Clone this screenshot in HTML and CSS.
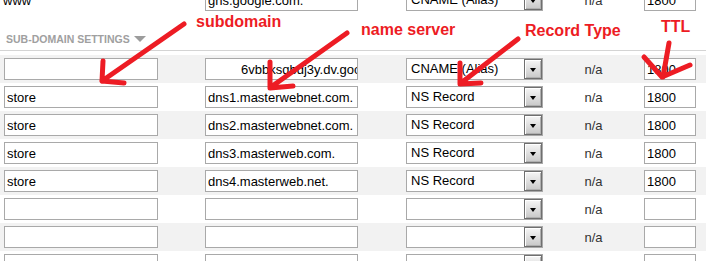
FILE: index.html
```html
<!DOCTYPE html>
<html lang="en">
<head>
    <meta charset="UTF-8">
    <title>Sub-domain settings</title>
    <link rel="stylesheet" href="styles.css">
</head>
<body>
    <div class="records">
        <div class="row">
            <span class="host-label">www</span>
            <input class="field" type="text" value="gns.google.com.">
            <div class="select"><span class="select-value">CNAME (Alias)</span><span class="drop"></span></div>
            <span class="na">n/a</span>
            <input class="field ttl" type="text" value="1800">
        </div>
    </div>

    <div class="section-head">SUB-DOMAIN SETTINGS <span class="caret"></span></div>

    <div class="records">
        <div class="row alt">
            <input class="field" type="text" value="">
            <input class="field masked" type="text" value="6vbbksqbdj3y.dv.googlehosted.com.">
            <div class="select"><span class="select-value">CNAME (Alias)</span><span class="drop"></span></div>
            <span class="na">n/a</span>
            <input class="field ttl" type="text" value="1800">
        </div>
        <div class="row">
            <input class="field" type="text" value="store">
            <input class="field" type="text" value="dns1.masterwebnet.com.">
            <div class="select"><span class="select-value">NS Record</span><span class="drop"></span></div>
            <span class="na">n/a</span>
            <input class="field ttl" type="text" value="1800">
        </div>
        <div class="row alt">
            <input class="field" type="text" value="store">
            <input class="field" type="text" value="dns2.masterwebnet.com.">
            <div class="select"><span class="select-value">NS Record</span><span class="drop"></span></div>
            <span class="na">n/a</span>
            <input class="field ttl" type="text" value="1800">
        </div>
        <div class="row">
            <input class="field" type="text" value="store">
            <input class="field" type="text" value="dns3.masterweb.com.">
            <div class="select"><span class="select-value">NS Record</span><span class="drop"></span></div>
            <span class="na">n/a</span>
            <input class="field ttl" type="text" value="1800">
        </div>
        <div class="row alt">
            <input class="field" type="text" value="store">
            <input class="field" type="text" value="dns4.masterweb.net.">
            <div class="select"><span class="select-value">NS Record</span><span class="drop"></span></div>
            <span class="na">n/a</span>
            <input class="field ttl" type="text" value="1800">
        </div>
        <div class="row">
            <input class="field" type="text" value="">
            <input class="field" type="text" value="">
            <div class="select"><span class="select-value"></span><span class="drop"></span></div>
            <span class="na">n/a</span>
            <input class="field ttl" type="text" value="">
        </div>
        <div class="row alt">
            <input class="field" type="text" value="">
            <input class="field" type="text" value="">
            <div class="select"><span class="select-value"></span><span class="drop"></span></div>
            <span class="na">n/a</span>
            <input class="field ttl" type="text" value="">
        </div>
        <div class="row">
            <input class="field" type="text" value="">
            <input class="field" type="text" value="">
            <div class="select"><span class="select-value"></span><span class="drop"></span></div>
            <span class="na">n/a</span>
            <input class="field ttl" type="text" value="">
        </div>
    </div>

    <!-- red paint annotations on top of the form -->
    <svg class="notes" width="706" height="261" viewBox="0 0 706 261">
        <g class="note-text">
            <text x="196" y="27">subdomain</text>
            <text x="361" y="35">name server</text>
            <text x="525" y="36">Record Type</text>
            <text x="661" y="32">TTL</text>
        </g>
        <g class="note-arrows">
            <path d="M184,24 L102,81 M103,61 L102,81 L124,83"/>
            <path d="M347,33 L271,87 M270,62 L270,88 L293,86"/>
            <path d="M518,39 L461,83 M460,63 L460,84 L481,83"/>
            <path d="M669,43 L663,77 M644,57 L662,77 L690,65"/>
        </g>
    </svg>
</body>
</html>
```

FILE: styles.css
```css
body {
    margin: 0;
    font-family: "Liberation Sans", Arial, sans-serif;
    font-size: 13px;
    background-color: #fff;
    position: relative;
    overflow: hidden;
}
.records:first-child {
    margin-top: -14px;
}
.row {
    display: grid;
    grid-template-columns: 201px 201px 137px 101px 52px;
    align-items: center;
    height: 28px;
    padding-left: 4px;
}
.row.alt {
    background-color: #f2f2f2;
}
.host-label {
    margin-left: -1px;
    color: #000;
}
.field {
    width: 154px;
    height: 22px;
    padding: 0 2px;
    margin: 0;
    border: 1px solid #a9a9a9;
    border-radius: 0;
    box-sizing: border-box;
    font-family: "Liberation Sans", Arial, sans-serif;
    font-size: 13px;
    color: #000;
    background-color: #fff;
    outline: none;
}
.row .field:nth-child(2) {
    width: 153px;
}
.field.masked {
    padding-left: 35px;
    padding-right: 0;
}
.field.ttl {
    width: 52px;
}
.select {
    display: flex;
    align-items: stretch;
    width: 137px;
    height: 22px;
    border: 1px solid #a9a9a9;
    box-sizing: border-box;
    background-color: #fff;
}
.select-value {
    flex: 1;
    padding-left: 4px;
    line-height: 20px;
    color: #000;
    white-space: nowrap;
    overflow: hidden;
}
.drop {
    position: relative;
    width: 18px;
    border: 1px solid #6f6f6f;
    box-sizing: border-box;
    box-shadow: inset 1px 1px 0 #fff, inset -1px -1px 0 #b0b0b0;
    background: linear-gradient(#f6f6f6, #c8c8c8);
}
.drop::after {
    content: "";
    position: absolute;
    left: 4.5px;
    top: 8px;
    border-left: 3.5px solid transparent;
    border-right: 3.5px solid transparent;
    border-top: 4px solid #000;
}
.na {
    text-align: center;
    color: #333;
}
.section-head {
    padding: 19px 6px 4px;
    margin-bottom: 4px;
    border-bottom: 1px solid #d4d4d4;
    font-size: 10.5px;
    line-height: 13px;
    font-weight: bold;
    color: #a0a0a0;
}
.caret {
    display: inline-block;
    margin-left: 1px;
    vertical-align: 1px;
    border-left: 6.5px solid transparent;
    border-right: 6.5px solid transparent;
    border-top: 6px solid #9c9c9c;
}
.notes {
    position: absolute;
    top: 0;
    left: 0;
    pointer-events: none;
}
.note-text {
    font-family: "Liberation Sans", Arial, sans-serif;
    font-size: 16px;
    font-weight: bold;
    fill: #ed1c24;
}
.note-arrows path {
    fill: none;
    stroke: #ed1c24;
    stroke-width: 5;
    stroke-linecap: round;
    stroke-linejoin: round;
}
```
